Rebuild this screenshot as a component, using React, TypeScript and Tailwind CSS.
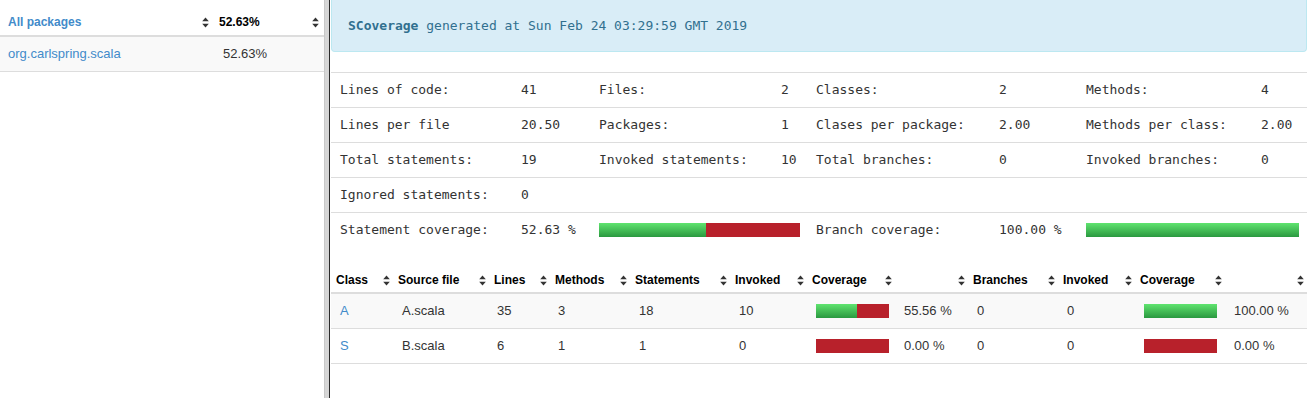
import React from "react";

const SortIcon = () => (
  <svg width="7" height="11" viewBox="0 0 7 11" className="shrink-0">
    <path d="M3.5 0.5 L6.8 4.3 L0.2 4.3 Z" fill="#333" />
    <path d="M3.5 10.5 L6.8 6.7 L0.2 6.7 Z" fill="#333" />
  </svg>
);

const Bar = ({ pct, className }: { pct: number; className: string }) => (
  <div className={`flex h-[14px] bg-[#b8212b] ${className}`}>
    <div
      className="h-full bg-linear-to-b from-[#5fe46f] to-[#2a9940]"
      style={{ width: `${pct}%` }}
    />
  </div>
);

const mono = "font-['DejaVu_Sans_Mono',monospace]";
const sans = "font-['Liberation_Sans',Arial,sans-serif]";

const statRows: string[][] = [
  ["Lines of code:", "41", "Files:", "2", "Classes:", "2", "Methods:", "4"],
  ["Lines per file", "20.50", "Packages:", "1", "Clases per package:", "2.00", "Methods per class:", "2.00"],
  ["Total statements:", "19", "Invoked statements:", "10", "Total branches:", "0", "Invoked branches:", "0"],
  ["Ignored statements:", "0", "", "", "", "", "", ""],
];
const statW = ["w-[181px]", "w-[78px]", "w-[182px]", "w-[35px]", "w-[183px]", "w-[87px]", "w-[175px]", "w-[55px]"];

const colW = [
  "w-[62px]", "w-[96px]", "w-[61px]", "w-[80px]", "w-[100px]", "w-[77px]",
  "w-[88px]", "w-[73px]", "w-[90px]", "w-[77px]", "w-[90px]", "w-[82px]",
];
const headers = ["Class", "Source file", "Lines", "Methods", "Statements", "Invoked", "Coverage", "", "Branches", "Invoked", "Coverage", ""];

type Row = { cls: string; file: string; lines: string; methods: string; st: string; inv: string; cov: number; covT: string; br: string; binv: string; bcov: number; bcovT: string };
const rows: Row[] = [
  { cls: "A", file: "A.scala", lines: "35", methods: "3", st: "18", inv: "10", cov: 55.56, covT: "55.56 %", br: "0", binv: "0", bcov: 100, bcovT: "100.00 %" },
  { cls: "S", file: "B.scala", lines: "6", methods: "1", st: "1", inv: "0", cov: 0, covT: "0.00 %", br: "0", binv: "0", bcov: 0, bcovT: "0.00 %" },
];

export default function App() {
  return (
    <div className={`flex h-[398px] w-[1307px] overflow-hidden bg-white ${sans}`}>
      {/* Left frame */}
      <div className="w-[324px] shrink-0">
        <div className="flex h-[37px] items-end border-b-2 border-[#ddd] pb-[5px] text-[12px] font-bold leading-[16px]">
          <div className="flex w-[213px] items-center justify-between pl-[8px] pr-[4px]">
            <span className="text-[#428bca]">All packages</span>
            <SortIcon />
          </div>
          <div className="flex flex-1 items-center justify-between pl-[6px] pr-[5px] text-black">
            <span>52.63%</span>
            <SortIcon />
          </div>
        </div>
        <div className="flex h-[35px] items-center border-b border-[#ddd] bg-[#f9f9f9] text-[13px]">
          <div className="w-[213px] pl-[8px] text-[#428bca]">org.carlspring.scala</div>
          <div className="pl-[10px] text-[#333]">52.63%</div>
        </div>
      </div>
      {/* Divider */}
      <div className="w-[5px] shrink-0 border-l border-[#c8c8c8] bg-[#d6d6d6]" />
      <div className="w-px shrink-0 bg-[#2a2a2a]" />
      {/* Right frame */}
      <div className="flex-1 pl-px">
        <div className={`flex h-[52px] items-center rounded-b-[4px] border border-t-0 border-[#bce8f1] bg-[#d9edf7] pl-[16px] text-[13px] text-[#31708f] ${mono}`}>
          <span className="font-bold">SCoverage</span>
          <span>&nbsp;generated at Sun Feb 24 03:29:59 GMT 2019</span>
        </div>
        <div className={`mt-[20px] text-[13px] text-[#333] ${mono}`}>
          {statRows.map((r, i) => (
            <div key={i} className="flex h-[35px] items-center border-t border-[#ddd]">
              {r.map((c, j) => (
                <div key={j} className={`shrink-0 whitespace-pre pl-[9px] ${statW[j]}`}>
                  {c}
                </div>
              ))}
            </div>
          ))}
          <div className="flex h-[35px] items-center border-t border-[#ddd]">
            <div className="w-[181px] shrink-0 pl-[9px]">Statement coverage:</div>
            <div className="w-[78px] shrink-0 pl-[9px]">52.63 %</div>
            <div className="w-[217px] shrink-0 pl-[9px]">
              <Bar pct={53} className="w-[201px]" />
            </div>
            <div className="w-[183px] shrink-0 pl-[9px]">Branch coverage:</div>
            <div className="w-[87px] shrink-0 pl-[9px]">100.00 %</div>
            <div className="w-[230px] shrink-0 pl-[9px]">
              <Bar pct={100} className="w-[213px]" />
            </div>
          </div>
        </div>
        <div className="mt-[20px]">
          <div className="flex h-[27px] items-center border-b-2 border-[#ddd] pt-[1px] text-[12px] font-bold text-black">
            {headers.map((h, i) => (
              <div key={i} className={`flex shrink-0 items-center justify-between pl-[5px] pr-[3px] ${colW[i]}`}>
                <span>{h}</span>
                <SortIcon />
              </div>
            ))}
          </div>
          {rows.map((r, i) => (
            <div key={i} className={`flex h-[35px] items-center border-b border-[#ddd] text-[13px] text-[#333] ${i === 0 ? "bg-[#f9f9f9]" : ""}`}>
              <div className="w-[62px] shrink-0 pl-[9px] text-[#428bca]">{r.cls}</div>
              <div className="w-[96px] shrink-0 pl-[9px]">{r.file}</div>
              <div className="w-[61px] shrink-0 pl-[8px]">{r.lines}</div>
              <div className="w-[80px] shrink-0 pl-[8px]">{r.methods}</div>
              <div className="w-[100px] shrink-0 pl-[9px]">{r.st}</div>
              <div className="w-[77px] shrink-0 pl-[9px]">{r.inv}</div>
              <div className="w-[88px] shrink-0 pl-[9px]">
                <Bar pct={r.cov} className="w-[73px]" />
              </div>
              <div className="w-[73px] shrink-0 pl-[9px]">{r.covT}</div>
              <div className="w-[90px] shrink-0 pl-[9px]">{r.br}</div>
              <div className="w-[77px] shrink-0 pl-[9px]">{r.binv}</div>
              <div className="w-[90px] shrink-0 pl-[9px]">
                <Bar pct={r.bcov} className="w-[73px]" />
              </div>
              <div className="w-[82px] shrink-0 pl-[9px]">{r.bcovT}</div>
            </div>
          ))}
        </div>
      </div>
    </div>
  );
}
